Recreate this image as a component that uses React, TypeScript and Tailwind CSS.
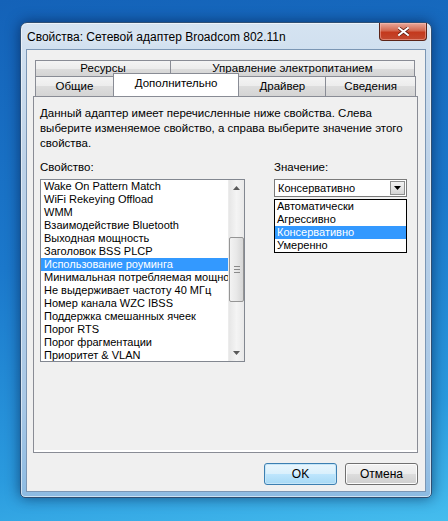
import React from "react";

const ui = "font-['Liberation_Sans',Arial,sans-serif]";

const properties = [
  "Wake On Pattern Match",
  "WiFi Rekeying Offload",
  "WMM",
  "Взаимодействие Bluetooth",
  "Выходная мощность",
  "Заголовок BSS PLCP",
  "Использование роуминга",
  "Минимальная потребляемая мощно",
  "Не выдерживает частоту 40 МГц",
  "Номер канала WZC IBSS",
  "Поддержка смешанных ячеек",
  "Порог RTS",
  "Порог фрагментации",
  "Приоритет & VLAN",
];

const values = ["Автоматически", "Агрессивно", "Консервативно", "Умеренно"];

const Arrow = ({ up }: { up?: boolean }) => (
  <svg width="7" height="4" viewBox="0 0 7 4">
    <path d={up ? "M0 4 L3.5 0 L7 4 Z" : "M0 0 L3.5 4 L7 0 Z"} fill="#5a5a5a" />
  </svg>
);

const Tab = ({ label, w, active }: { label: string; w: string; active?: boolean }) => (
  <div
    className={`${w} -ml-px first:ml-0 flex items-center justify-center border border-[#898c95] ${
      active
        ? "relative z-10 -mt-[2px] h-[23px] border-b-0 bg-white pb-[3px]"
        : "h-[20px] border-b-0 bg-[linear-gradient(#f4f4f4,#ececec_50%,#dddddd_50%,#d4d4d4)]"
    }`}
  >
    {label}
  </div>
);

const Button = ({ label, primary }: { label: string; primary?: boolean }) => (
  <button
    className={`w-[73px] h-[22px] rounded-[3px] border text-[12px] text-black ${
      primary
        ? "border-[#3c7fb1] bg-[linear-gradient(#eaf6fd,#d9f0fc_50%,#bee6fd_50%,#a7d9f5)] shadow-[inset_0_0_0_1px_#c6e6f8]"
        : "border-[#707070] bg-[linear-gradient(#f2f2f2,#ebebeb_50%,#dddddd_50%,#cfcfcf)] shadow-[inset_0_0_0_1px_#fcfcfc]"
    }`}
  >
    {label}
  </button>
);

export default function App() {
  return (
    <div
      className={`${ui} w-[448px] h-[521px] overflow-hidden bg-[linear-gradient(170deg,#1462b8_0%,#1b78cb_45%,#2a9ade_80%,#45bdee_100%)] pt-[22px] pl-[20px]`}
    >
      {/* окно */}
      <div className="w-[412px] h-[476px] flex flex-col rounded-t-[7px] rounded-b-[5px] border border-[#2f4f73] bg-[linear-gradient(#d5e3f1,#bdd2e8_30%,#a9c8e6_80%,#8dbbe2)] px-[5px] pb-[5px] shadow-[0_0_14px_rgba(0,20,60,0.6),inset_0_0_0_1px_rgba(255,255,255,0.55)]">
        <div className="h-[26px] flex items-start justify-between">
          <span className="pl-[1px] pt-[5px] text-[12px] text-black [text-shadow:0_0_8px_#ffffff]">
            Свойства: Сетевой адаптер Broadcom 802.11n
          </span>
          <div className="w-[48px] h-[18px] -mr-[1px] rounded-b-[4px] border border-t-0 border-[#5c2418] bg-[linear-gradient(#e9a99b,#d2674f_45%,#c4391d_55%,#c24a30)] shadow-[inset_0_0_0_1px_rgba(255,200,190,0.45)] flex items-center justify-center">
            <svg width="11" height="9" viewBox="0 0 11 9">
              <path d="M1 1 L10 8 M10 1 L1 8" stroke="#5a1a10" strokeWidth="3.4" strokeLinecap="square" />
              <path d="M1 1 L10 8 M10 1 L1 8" stroke="#ffffff" strokeWidth="2" strokeLinecap="square" />
            </svg>
          </div>
        </div>

        {/* клиентская область */}
        <div className="flex-1 flex flex-col border border-[#7b96b4] bg-[#f0f0f0] pl-[6px] pr-[7px] pt-[10px] text-[11.5px] text-black">
          <div className="px-[2px]">
            <div className="flex h-[16px] items-stretch">
              <div className="w-[136px] h-[17px] flex items-center justify-center border border-[#898c95] bg-[linear-gradient(#f4f4f4,#ececec_50%,#dddddd_50%,#d4d4d4)]">
                Ресурсы
              </div>
              <div className="w-[245px] h-[17px] -ml-px flex items-center justify-center border border-[#898c95] bg-[linear-gradient(#f4f4f4,#ececec_50%,#dddddd_50%,#d4d4d4)]">
                Управление электропитанием
              </div>
            </div>
            <div className="relative z-10 flex items-end h-[20px]">
              <Tab label="Общие" w="w-[79px]" />
              <Tab label="Дополнительно" w="w-[127px]" active />
              <Tab label="Драйвер" w="w-[88px]" />
              <Tab label="Сведения" w="w-[91px]" />
            </div>
          </div>

          <div className="h-[357px] border border-[#898c95] bg-[#f0f0f0] shadow-[inset_0_-2px_0_#ffffff] pl-[6px] pt-[9px]">
            <div className="leading-[15px] whitespace-nowrap">
              <div>Данный адаптер имеет перечисленные ниже свойства. Слева</div>
              <div>выберите изменяемое свойство, а справа выберите значение этого</div>
              <div>свойства.</div>
            </div>

            <div className="mt-[9px] flex gap-[29px]">
              <div>
                <div className="leading-[15px]">Свойство:</div>
                <div className="mt-[4px] w-[205px] h-[183px] flex border border-[#828790] bg-white text-[11px]">
                  <ul className="flex-1 overflow-hidden">
                    {properties.map((p) => (
                      <li
                        key={p}
                        className={`h-[13px] leading-[13px] pl-[3px] whitespace-nowrap ${
                          p === "Использование роуминга" ? "bg-[#3399ff] text-white" : ""
                        }`}
                      >
                        {p}
                      </li>
                    ))}
                  </ul>
                  <div className="w-[16px] flex flex-col items-center bg-[linear-gradient(90deg,#e6e6e6,#f4f4f4_50%,#e9e9e9)] border-l border-[#ececec]">
                    <div className="h-[14px] flex items-center pt-[2px]">
                      <Arrow up />
                    </div>
                    <div className="mt-[43px] w-[15px] h-[65px] rounded-[2px] border border-[#959595] bg-[linear-gradient(90deg,#f3f3f3,#e8e8e8_50%,#d6d6d6)] flex flex-col items-center justify-center gap-[2px]">
                      <div className="w-[6px] h-px bg-[#8a8a8a]" />
                      <div className="w-[6px] h-px bg-[#8a8a8a]" />
                      <div className="w-[6px] h-px bg-[#8a8a8a]" />
                    </div>
                    <div className="mt-auto h-[14px] flex items-center pb-[2px]">
                      <Arrow />
                    </div>
                  </div>
                </div>
              </div>

              <div>
                <div className="leading-[15px]">Значение:</div>
                <div className="mt-[4px] w-[133px] text-[11px]">
                  <div className="h-[18px] flex items-center border border-[#7a7a7a] bg-white pl-[3px]">
                    <span className="flex-1">Консервативно</span>
                    <div className="w-[15px] h-[14px] mr-px border border-[#8e8f8f] bg-[linear-gradient(#f2f2f2,#e6e6e6_50%,#d4d4d4)] flex items-center justify-center">
                      <svg width="7" height="4" viewBox="0 0 7 4">
                        <path d="M0 0 L3.5 4 L7 0 Z" fill="#000000" />
                      </svg>
                    </div>
                  </div>
                  <ul className="mt-[2px] border border-[#000000] bg-white">
                    {values.map((v) => (
                      <li
                        key={v}
                        className={`h-[13px] leading-[13px] pl-[2px] ${
                          v === "Консервативно" ? "bg-[#3399ff] text-white" : ""
                        }`}
                      >
                        {v}
                      </li>
                    ))}
                  </ul>
                </div>
              </div>
            </div>
          </div>

          <div className="mt-[10px] flex justify-end gap-[8px]">
            <Button label="OK" primary />
            <Button label="Отмена" />
          </div>
        </div>
      </div>
    </div>
  );
}
